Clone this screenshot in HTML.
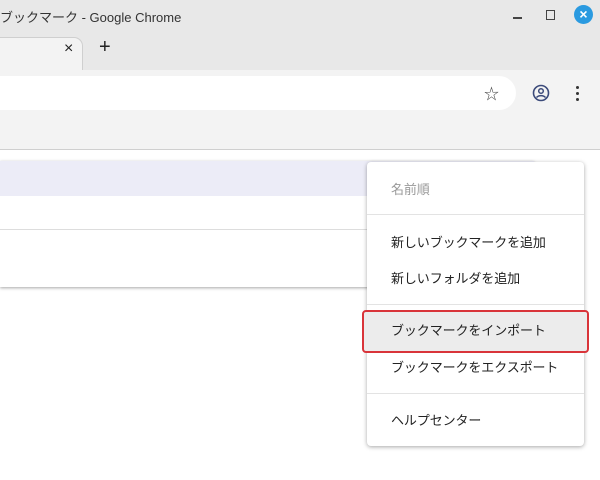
<!DOCTYPE html>
<html><head><meta charset="utf-8"><style>
*{margin:0;padding:0;box-sizing:border-box}
body{width:600px;height:480px;overflow:hidden;background:#fff;font-family:"Liberation Sans","Noto Sans CJK JP",sans-serif;position:relative}
.a{position:absolute}
.title{left:0;top:0;width:600px;height:70px;background:#e8e8e8}
.mi{position:absolute;left:24px;font-size:13px;color:#222;letter-spacing:-0.1px}
</style></head><body>
<div class="a title"></div>
<div class="a" style="left:0;top:7px;font-size:13px;color:#333;">ブックマーク - Google Chrome</div>
<div class="a" style="left:513px;top:17px;width:9px;height:1.5px;background:#444"></div>
<div class="a" style="left:546px;top:10px;width:9px;height:10px;border:1.3px solid #444"></div>
<div class="a" style="left:574px;top:5px;width:19px;height:19px;border-radius:50%;background:#2a9ae0;color:#fff;font-size:14px;line-height:19px;text-align:center;font-weight:bold">×</div>
<!-- tab -->
<div class="a" style="left:-10px;top:37px;width:93px;height:40px;background:#f3f3f3;border:1px solid #cfcfcf;border-bottom:none;border-radius:0 9px 0 0"></div>
<div class="a" style="left:64px;top:40px;font-size:16px;color:#222">×</div>
<div class="a" style="left:99px;top:36px;font-size:20px;color:#222">+</div>
<!-- toolbar -->
<div class="a" style="left:0;top:70px;width:600px;height:80px;background:#f3f3f3;border-bottom:1px solid #cfcfcf"></div>
<div class="a" style="left:-20px;top:76px;width:536px;height:34px;background:#fff;border-radius:17px"></div>
<div class="a" style="left:484px;top:83px;font-size:15px;color:#444">☆</div>
<svg class="a" style="left:532px;top:84px" width="18" height="18" viewBox="0 0 18 18"><circle cx="9" cy="9" r="7.5" fill="none" stroke="#3b4a7a" stroke-width="1.6"/><circle cx="9" cy="7" r="2.3" fill="none" stroke="#3b4a7a" stroke-width="1.5"/><path d="M4.5 13.5c2.5-2.5 6.5-2.5 9 0" fill="none" stroke="#3b4a7a" stroke-width="1.5"/></svg>
<div class="a" style="left:576px;top:86px;width:3px;height:3px;border-radius:50%;background:#333;box-shadow:0 6px 0 #333,0 12px 0 #333"></div>
<!-- content card -->
<div class="a" style="left:0;top:161px;width:534px;height:126px;background:#fff;box-shadow:0 1px 3px rgba(0,0,0,.35)"></div>
<div class="a" style="left:0;top:161px;width:534px;height:35px;background:#ececf7"></div>
<div class="a" style="left:0;top:229px;width:534px;height:1px;background:#ddd"></div>
<!-- menu -->
<div class="a" style="left:367px;top:162px;width:217px;height:284px;background:#fff;border-radius:4px;box-shadow:0 1px 4px rgba(0,0,0,.35)">
<div class="mi" style="top:17px;color:#999">名前順</div>
<div class="a" style="left:0;top:52px;width:217px;height:1px;background:#e3e3e3"></div>
<div class="mi" style="top:70px">新しいブックマークを追加</div>
<div class="mi" style="top:106px">新しいフォルダを追加</div>
<div class="a" style="left:0;top:142px;width:217px;height:1px;background:#e3e3e3"></div>
<div class="mi" style="top:195px">ブックマークをエクスポート</div>
<div class="a" style="left:0;top:231px;width:217px;height:1px;background:#e3e3e3"></div>
<div class="mi" style="top:248px">ヘルプセンター</div>
</div>
<div class="a" style="left:362px;top:310px;width:227px;height:43px;background:#ececec;border:2px solid #d9343a;border-radius:4px"></div>
<div class="a" style="left:391px;top:320px;font-size:13px;color:#222;letter-spacing:-0.1px">ブックマークをインポート</div>
</body></html>
